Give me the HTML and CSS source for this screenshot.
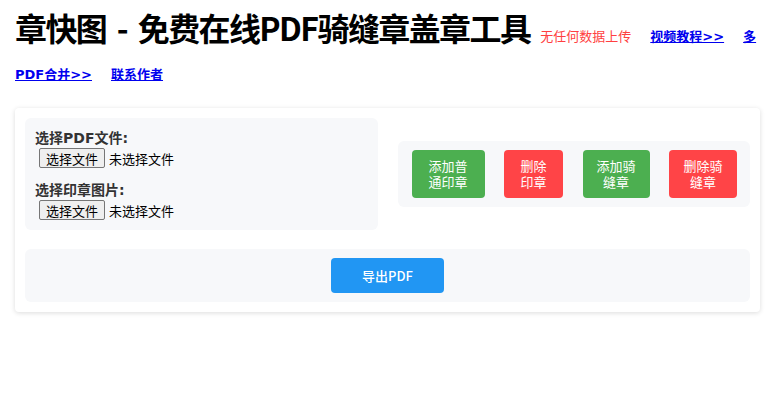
FILE: index.html
```html
<!DOCTYPE html>
<html lang="zh-CN">
<head>
<meta charset="utf-8">
<title>章快图 - 免费在线PDF骑缝章盖章工具</title>
<link rel="stylesheet" href="styles.css">
</head>
<body>
<div class="page">
  <div class="header"><h1 class="title">章快图 - 免费在线PDF骑缝章盖章工具</h1><span class="notice">无任何数据上传</span><a class="link" href="#">视频教程&gt;&gt;</a><a class="link" href="#">多PDF合并&gt;&gt;</a><a class="link" href="#">联系作者</a></div>

  <div class="card">
    <div class="top-row">
      <div class="panel files">
        <div class="field">
          <div class="label">选择PDF文件:</div>
          <div class="file"><span class="file-btn">选择文件</span><span class="file-name">未选择文件</span></div>
        </div>
        <div class="field">
          <div class="label">选择印章图片:</div>
          <div class="file"><span class="file-btn">选择文件</span><span class="file-name">未选择文件</span></div>
        </div>
      </div>
      <div class="panel actions">
        <button class="btn green b1">添加普通印章</button>
        <button class="btn red b2">删除印章</button>
        <button class="btn green b3">添加骑缝章</button>
        <button class="btn red b4">删除骑缝章</button>
      </div>
    </div>
    <div class="panel export">
      <button class="btn blue">导出PDF</button>
    </div>
  </div>
</div>
</body>
</html>
```

FILE: styles.css
```css
html, body {
  margin: 0;
  padding: 0;
  background: #ffffff;
  overflow-x: hidden;
}

body {
  font-family: "Noto Sans CJK SC", "Liberation Sans", sans-serif;
  color: #000;
}

.page {
  padding: 4px 15px 20px 15px;
  width: 745px;
}

.header {
  font-family: "DejaVu Sans", "Noto Sans CJK SC", sans-serif;
  font-size: 13px;
  font-weight: bold;
  line-height: 20px;
}

.title {
  display: inline-block;
  font-family: "Noto Sans CJK SC", "Liberation Sans", sans-serif;
  font-size: 32px;
  line-height: 46px;
  font-weight: bold;
  margin: 0 10px 15px 0;
  letter-spacing: -1.6px;
  word-spacing: 5px;
  color: #000;
}

.notice {
  color: #ff4040;
  font-weight: normal;
}

.link {
  color: #0000ee;
  text-decoration: underline;
  margin-left: 19px;
}

.card {
  margin-top: 23px;
  background: #fff;
  border-radius: 4px;
  box-shadow: 0 1px 5px rgba(0, 0, 0, 0.14);
  padding: 10px;
  display: flex;
  flex-direction: column;
  gap: 19px;
}

.top-row {
  display: grid;
  grid-template-columns: 1fr 1fr;
  gap: 20px;
  align-items: center;
}

.panel {
  background: #f7f8fa;
  border-radius: 6px;
}

.files {
  padding: 10px;
  display: flex;
  flex-direction: column;
  gap: 12px;
}

.label {
  font-family: "DejaVu Sans", "Noto Sans CJK SC", sans-serif;
  font-size: 14px;
  font-weight: bold;
  line-height: 20px;
  color: #333;
}

.file {
  display: flex;
  align-items: center;
  height: 20px;
  font-size: 13px;
}

.file-btn {
  margin-left: 4px;
  box-sizing: border-box;
  height: 20px;
  width: 66px;
  display: flex;
  align-items: center;
  justify-content: center;
  background: #efefef;
  border: 1px solid #767676;
  border-radius: 2px;
  color: #000;
  font-size: 13px;
}

.file-name {
  margin-left: 4px;
  color: #000;
}

.actions {
  display: flex;
  justify-content: space-between;
  align-items: center;
  padding: 9px 13px 9px 14px;
}

.btn {
  font-family: inherit;
  font-size: 13px;
  line-height: 16px;
  color: #fff;
  border: none;
  border-radius: 4px;
  padding: 8px 12px;
  flex: none;
  cursor: pointer;
}

.green { background: #4caf50; }
.red { background: #ff4447; }
.blue { background: #2196f3; }

.b1 { width: 73px; }
.b2 { width: 59px; }
.b3 { width: 67px; }
.b4 { width: 68px; }

.export {
  padding: 9px;
  text-align: center;
}

.export .btn {
  width: 113px;
  height: 35px;
  padding: 0;
  font-weight: 500;
}
```
